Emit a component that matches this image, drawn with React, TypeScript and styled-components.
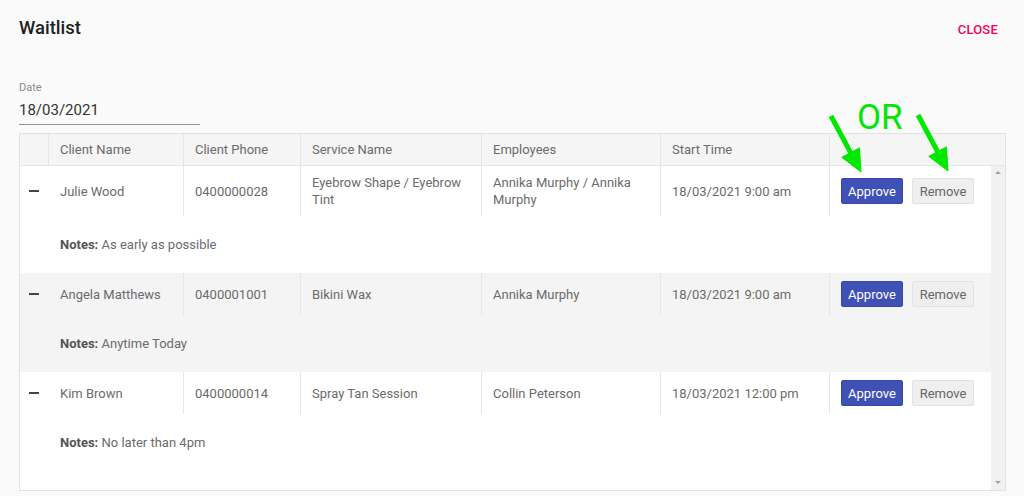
import React from 'react';
import styled, { createGlobalStyle } from 'styled-components';

const GlobalStyle = createGlobalStyle`
   html, body {
      margin: 0;
      background: #fafafa;
      font-family: Roboto, "Liberation Sans", Arial, sans-serif;
   }
   * { box-sizing: border-box; }
`;

const Page = styled.div`
   position: relative;
   width: 1024px;
   height: 496px;
   padding: 0 18px 0 19px;
   overflow: hidden;
`;

const TopBar = styled.div`
   height: 56px;
   display: flex;
   align-items: center;
   justify-content: space-between;
`;

const Title = styled.h2`
   margin: 0;
   font-size: 18.5px;
   font-weight: 500;
   color: #212121;
`;

const CloseButton = styled.button`
   margin: 2px 8px 0 0;
   padding: 0;
   border: 0;
   background: none;
   font-family: inherit;
   font-size: 13px;
   font-weight: 500;
   letter-spacing: 0.2px;
   color: #f50057;
   cursor: pointer;
`;

const DateField = styled.div`
   width: 181px;
   margin-top: 25px;
   .label {
      font-size: 11px;
      line-height: 14px;
      color: #8a8a8a;
   }
   .value {
      margin-top: 5px;
      font-size: 15px;
      line-height: 20px;
      color: #333;
      padding-bottom: 4px;
      border-bottom: 1px solid #949494;
   }
`;

const Table = styled.div`
   margin-top: 8px;
   border: 1px solid #e2e2e2;
   background: #fff;
`;

const cols = '28px 135px 117px 181px 179px 169px 1fr';

const HeaderRow = styled.div`
   display: grid;
   grid-template-columns: ${cols};
   height: 32px;
   background: #f5f5f5;
   border-bottom: 1px solid #e6e6e6;
`;

const HeadCell = styled.div<{ $first?: boolean }>`
   display: flex;
   align-items: center;
   padding: 0 12px 0 11px;
   font-size: 13px;
   color: #6b6b6b;
   border-left: ${p => (p.$first ? 'none' : '1px solid #e6e6e6')};
`;

const Body = styled.div`
   display: flex;
   height: 324px;
`;

const Rows = styled.div`
   flex: 1;
   overflow: hidden;
`;

const Row = styled.div<{ $alt?: boolean }>`
   background: ${p => (p.$alt ? '#f4f4f4' : '#fff')};
`;

const MainLine = styled.div`
   display: grid;
   grid-template-columns: ${cols};
   min-height: 42px;
`;

const Cell = styled.div<{ $line?: boolean }>`
   display: flex;
   align-items: center;
   padding: 8px 12px;
   padding-left: ${p => (p.$line ? '11px' : '12px')};
   font-size: 13px;
   line-height: 17px;
   color: #6b6b6b;
   border-left: ${p => (p.$line ? '1px solid #e6e6e6' : 'none')};
`;

const Collapse = styled.div`
   display: flex;
   align-items: center;
   justify-content: center;
   &:after {
      content: "";
      width: 10px;
      height: 2px;
      background: #444;
   }
`;

const Notes = styled.div`
   padding: 20px 12px 20px 40px;
   font-size: 13px;
   line-height: 17px;
   color: #6b6b6b;
   b {
      font-weight: 700;
      color: #555;
   }
`;

const Button = styled.button<{ $primary?: boolean }>`
   height: 26px;
   width: 62px;
   padding: 0;
   margin-right: 9px;
   border-radius: 2px;
   font-family: inherit;
   font-size: 13px;
   cursor: pointer;
   background: ${p => (p.$primary ? '#3f51b5' : '#efefef')};
   color: ${p => (p.$primary ? '#fff' : '#666')};
   border: 1px solid ${p => (p.$primary ? '#3949ab' : '#e2e2e2')};
`;

const Scrollbar = styled.div`
   width: 14px;
   background: #f1f1f1;
   display: flex;
   flex-direction: column;
   justify-content: space-between;
   align-items: center;
   padding: 5px 0 6px;
   &:before, &:after {
      content: "";
      width: 0;
      height: 0;
      border-left: 3px solid transparent;
      border-right: 3px solid transparent;
   }
   &:before { border-bottom: 3px solid #a3a3a3; }
   &:after { border-top: 3px solid #a3a3a3; }
`;

const Annotation = styled.svg`
   position: absolute;
   left: 0;
   top: 0;
   pointer-events: none;
`;

const OrLabel = styled.span`
   position: absolute;
   left: 857px;
   top: 98px;
   font-size: 35px;
   line-height: 40px;
   color: #00e800;
`;

type Entry = {
   name: string;
   phone: string;
   service: string;
   employees: string;
   start: string;
   notes: string;
};

const entries: Entry[] = [
   { name: 'Julie Wood', phone: '0400000028', service: 'Eyebrow Shape / Eyebrow Tint', employees: 'Annika Murphy / Annika Murphy', start: '18/03/2021 9:00 am', notes: 'As early as possible' },
   { name: 'Angela Matthews', phone: '0400001001', service: 'Bikini Wax', employees: 'Annika Murphy', start: '18/03/2021 9:00 am', notes: 'Anytime Today' },
   { name: 'Kim Brown', phone: '0400000014', service: 'Spray Tan Session', employees: 'Collin Peterson', start: '18/03/2021 12:00 pm', notes: 'No later than 4pm' },
];

const Arrow = ({ x1, y1, x2, y2 }: { x1: number; y1: number; x2: number; y2: number }) => {
   const len = Math.hypot(x2 - x1, y2 - y1);
   const dx = (x2 - x1) / len;
   const dy = (y2 - y1) / len;
   const bx = x2 - dx * 22;
   const by = y2 - dy * 22;
   const nx = dy;
   const ny = -dx;
   const pts = `${x2},${y2} ${bx + nx * 10},${by + ny * 10} ${bx - nx * 10},${by - ny * 10}`;
   return (
      <g fill="#00e800" stroke="#00e800">
         <line x1={x1} y1={y1} x2={bx} y2={by} strokeWidth={5} />
         <polygon points={pts} strokeWidth={1} />
      </g>
   );
};

const App = () => {
   return (
      <Page>
         <GlobalStyle />
         <TopBar>
            <Title>Waitlist</Title>
            <CloseButton>CLOSE</CloseButton>
         </TopBar>
         <DateField>
            <div className="label">Date</div>
            <div className="value">18/03/2021</div>
         </DateField>
         <Table>
            <HeaderRow>
               <HeadCell $first />
               <HeadCell>Client Name</HeadCell>
               <HeadCell>Client Phone</HeadCell>
               <HeadCell>Service Name</HeadCell>
               <HeadCell>Employees</HeadCell>
               <HeadCell>Start Time</HeadCell>
               <HeadCell />
            </HeaderRow>
            <Body>
               <Rows>
                  {entries.map((e, i) => (
                     <Row key={e.name} $alt={i % 2 === 1}>
                        <MainLine>
                           <Collapse />
                           <Cell>{e.name}</Cell>
                           <Cell $line>{e.phone}</Cell>
                           <Cell $line>{e.service}</Cell>
                           <Cell $line>{e.employees}</Cell>
                           <Cell $line>{e.start}</Cell>
                           <Cell $line>
                              <Button $primary>Approve</Button>
                              <Button>Remove</Button>
                           </Cell>
                        </MainLine>
                        <Notes>
                           <b>Notes:</b> {e.notes}
                        </Notes>
                     </Row>
                  ))}
               </Rows>
               <Scrollbar />
            </Body>
         </Table>
         <Annotation width={1024} height={496}>
            <Arrow x1={831} y1={116} x2={861} y2={172} />
            <Arrow x1={918} y1={115} x2={948} y2={171} />
         </Annotation>
         <OrLabel>OR</OrLabel>
      </Page>
   );
};

export default App;
